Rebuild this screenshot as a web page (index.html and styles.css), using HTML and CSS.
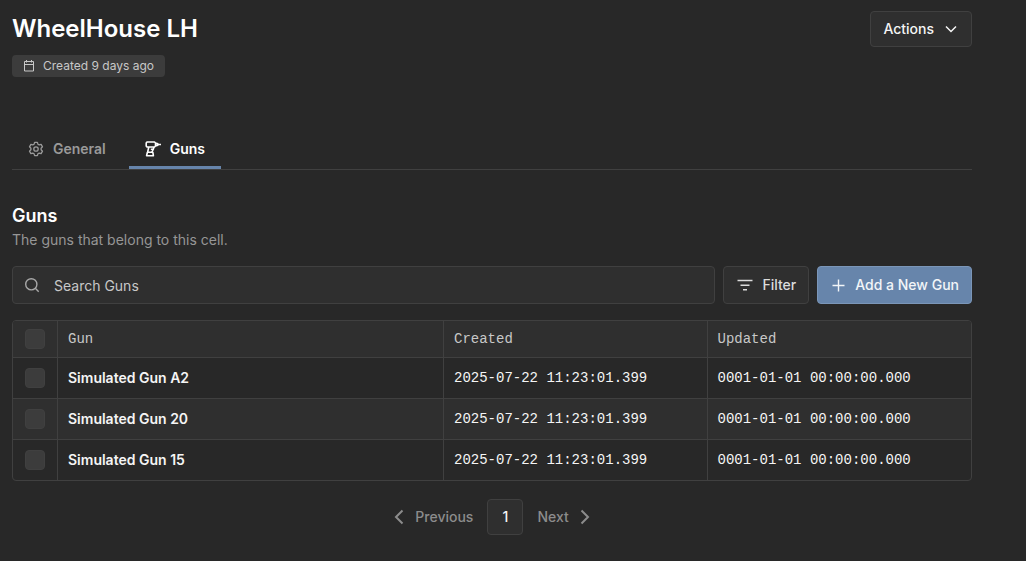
FILE: index.html
```html
<!DOCTYPE html>
<html lang="en">
<head>
<meta charset="utf-8">
<meta name="viewport" content="width=device-width, initial-scale=1">
<title>WheelHouse LH</title>
<link rel="stylesheet" href="styles.css">
</head>
<body>
<main class="page">
  <header class="header">
    <div class="heading">
      <h1 class="title">WheelHouse LH</h1>
      <span class="badge">
        <svg class="icon-sm" viewBox="0 0 12 12" fill="none" stroke="currentColor" aria-hidden="true"><path d="M1.500 1.500h9v9.500h-9zM1.500 4.500h9M3.500 0v2.500M8.500 0v2.500"/></svg>
        Created 9 days ago
      </span>
    </div>
    <button class="button actions" type="button">Actions
      <svg class="icon" viewBox="0 0 16 16" fill="none" stroke="currentColor" stroke-width="1.5" aria-hidden="true"><path d="M3 5.500l5 5 5-5"/></svg>
    </button>
  </header>

  <nav class="tabs">
    <a class="tab" href="#general">
      <svg class="icon" viewBox="0 0 16 16" fill="none" stroke="currentColor" stroke-width="1.300" stroke-linejoin="round" aria-hidden="true"><path d="M6.600 1.300h2.800l.5 1.900 1.300.7 1.900-.5 1.400 2.400-1.400 1.400v1.600l1.400 1.400-1.400 2.400-1.900-.5-1.300.7-.5 1.900H6.600l-.5-1.900-1.300-.7-1.900.5-1.400-2.400 1.400-1.400V7.200L1.500 5.800l1.400-2.400 1.900.5 1.300-.7z"/><circle cx="8" cy="8" r="2.200"/></svg>
      General
    </a>
    <a class="tab tab-active" href="#guns" aria-current="page">
      <svg class="icon" viewBox="0 0 16 16" fill="none" stroke="currentColor" stroke-width="1.600" stroke-linejoin="round" aria-hidden="true"><path d="M2 1h7.500l1 1v3l-1 1H2L1.200 5V2zM10.500 2l2.300.8v1.400L10.500 5M12.500 3.500H16M3.800 6L2.600 11.200M9 6L8.200 8.500 6.800 11.200M8.200 8.300H5.800M2.400 11.200h5.400l.6 3.500H1.600z"/></svg>
      Guns
    </a>
  </nav>

  <section class="section" id="guns">
    <h2 class="subtitle">Guns</h2>
    <p class="description">The guns that belong to this cell.</p>

    <div class="toolbar">
      <label class="search">
        <svg class="icon" viewBox="0 0 16 16" fill="none" stroke="currentColor" stroke-width="1.400" aria-hidden="true"><circle cx="7.300" cy="7.300" r="5.600"/><path d="M11.300 11.300l3.400 3.400"/></svg>
        <input class="search-input" type="search" placeholder="Search Guns" aria-label="Search Guns">
      </label>
      <button class="button filter" type="button">
        <svg class="icon" viewBox="0 0 16 16" fill="none" stroke="currentColor" stroke-width="1.400" aria-hidden="true"><path d="M.5 3.500h15M3.500 8.300h9M6 12.800h4"/></svg>
        Filter
      </button>
      <button class="button primary" type="button">
        <svg class="icon" viewBox="0 0 16 16" fill="none" stroke="currentColor" stroke-width="1.400" aria-hidden="true"><path d="M8.500 2.500v12M2.500 8.500h12"/></svg>
        Add a New Gun
      </button>
    </div>

    <div class="table-frame">
      <table class="table">
        <thead>
          <tr><th class="check-cell"><input class="check" type="checkbox" aria-label="Select all guns"></th><th class="gun-col">Gun</th><th>Created</th><th>Updated</th></tr>
        </thead>
        <tbody>
          <tr><td class="check-cell"><input class="check" type="checkbox" aria-label="Select Simulated Gun A2"></td><td class="name">Simulated Gun A2</td><td>2025-07-22 11:23:01.399</td><td>0001-01-01 00:00:00.000</td></tr>
          <tr><td class="check-cell"><input class="check" type="checkbox" aria-label="Select Simulated Gun 20"></td><td class="name">Simulated Gun 20</td><td>2025-07-22 11:23:01.399</td><td>0001-01-01 00:00:00.000</td></tr>
          <tr><td class="check-cell"><input class="check" type="checkbox" aria-label="Select Simulated Gun 15"></td><td class="name">Simulated Gun 15</td><td>2025-07-22 11:23:01.399</td><td>0001-01-01 00:00:00.000</td></tr>
        </tbody>
      </table>
    </div>

    <nav class="pagination" aria-label="Pagination">
      <button class="page-step" type="button">
        <svg class="icon" viewBox="0 0 16 16" fill="none" stroke="currentColor" stroke-width="2" aria-hidden="true"><path d="M11.500 1.500L5 8l6.500 6.500"/></svg>
        Previous
      </button>
      <button class="button page-number" type="button" aria-current="page">1</button>
      <button class="page-step" type="button">
        Next
        <svg class="icon" viewBox="0 0 16 16" fill="none" stroke="currentColor" stroke-width="2" aria-hidden="true"><path d="M4.500 1.500L11 8l-6.500 6.500"/></svg>
      </button>
    </nav>
  </section>
</main>
</body>
</html>
```

FILE: styles.css
```css
* {
  box-sizing: border-box;
}

body {
  margin: 0;
  background: #282828;
  color: #f5f5f5;
  font: 500 14px/20px Inter, sans-serif;
}

button,
input {
  font: inherit;
  color: inherit;
}

.page {
  padding: 11px 54px 24px 12px;
}

.icon {
  width: 16px;
  height: 16px;
  flex: none;
}

.icon-sm {
  width: 12px;
  height: 12px;
  flex: none;
}

.header {
  display: flex;
  justify-content: space-between;
  align-items: flex-start;
}

.heading {
  display: flex;
  flex-direction: column;
  align-items: flex-start;
  gap: 8px;
}

.title {
  margin: 0;
  font-size: 24px;
  line-height: 36px;
  font-weight: 600;
  color: #fff;
}

.badge {
  display: flex;
  align-items: center;
  gap: 8px;
  height: 22px;
  padding: 0 11px;
  border-radius: 4px;
  background: #3c3c3c;
  color: #c8c8c8;
  font-size: 12px;
  font-weight: 400;
}

.button {
  display: flex;
  align-items: center;
  justify-content: center;
  height: 36px;
  padding: 0 12px;
  border: 1px solid #404040;
  border-radius: 4px;
  background: #2f2f2f;
  white-space: nowrap;
}

.actions {
  gap: 9px;
}

.tabs {
  display: flex;
  margin-top: 52px;
  border-bottom: 1px solid #404040;
}

.tab {
  display: flex;
  align-items: center;
  gap: 9px;
  height: 40px;
  padding: 3px 16px 0;
  border-bottom: 3px solid transparent;
  color: #9a9a9a;
  font-weight: 600;
  text-decoration: none;
}

.tab + .tab {
  margin-left: 7px;
}

.tab-active {
  border-bottom-color: #6785ab;
  color: #fff;
}

.section {
  margin-top: 34px;
}

.subtitle {
  margin: 0;
  font-size: 18px;
  line-height: 24px;
  font-weight: 600;
  color: #fff;
}

.description {
  margin: 2px 0 16px;
  color: #969696;
  font-weight: 400;
}

.toolbar {
  display: flex;
  gap: 8px;
}

.toolbar .button {
  height: 38px;
}

.search {
  display: flex;
  flex: 1;
  align-items: center;
  gap: 14px;
  height: 38px;
  padding: 0 11px;
  border: 1px solid #404040;
  border-radius: 4px;
  background: #2f2f2f;
  color: #a8a8a8;
}

.search-input {
  flex: 1;
  min-width: 0;
  padding: 1px 0 0;
  border: 0;
  outline: 0;
  background: none;
  font-weight: 400;
}

.search-input::placeholder {
  color: #c8c8c8;
  opacity: 1;
}

.toolbar .filter {
  gap: 9px;
  padding-left: 13px;
  color: #dcdcdc;
}

.toolbar .primary {
  gap: 9px;
  border-color: #7b96b8;
  background: #6785ab;
  color: #f2f5f8;
}

.table-frame {
  margin-top: 16px;
  overflow: hidden;
  border: 1px solid #404040;
  border-radius: 4px;
}

.table {
  width: 100%;
  table-layout: fixed;
  border-collapse: separate;
  border-spacing: 0;
  font: 400 14px/20px "Liberation Mono", monospace;
}

.table th,
.table td {
  height: 41px;
  padding: 0 10px;
  border-right: 1px solid #404040;
  border-bottom: 1px solid #404040;
  text-align: left;
}

.table th {
  height: 37px;
  background: #2f2f2f;
  color: #c8c8c8;
  font-weight: 400;
}

.table th:last-child,
.table td:last-child {
  border-right: 0;
}

.table tr:last-child td {
  height: 40px;
  border-bottom: 0;
}

.table tbody tr:nth-child(even) {
  background: #2f2f2f;
}

.table .check-cell {
  width: 45px;
  padding: 0 12px;
}

.table .gun-col {
  width: 386px;
}

.table .name {
  font-family: Inter, sans-serif;
  font-weight: 600;
}

.check {
  display: block;
  appearance: none;
  width: 20px;
  height: 20px;
  margin: 0;
  border: 1px solid #404040;
  border-radius: 4px;
  background: #3c3c3c;
}

.pagination {
  display: flex;
  align-items: center;
  justify-content: center;
  gap: 14px;
  margin-top: 18px;
}

.page-step {
  display: flex;
  align-items: center;
  gap: 8px;
  padding: 0;
  border: 0;
  background: none;
  color: #8c8c8c;
}

.page-number {
  width: 36px;
  padding: 0;
}
```
